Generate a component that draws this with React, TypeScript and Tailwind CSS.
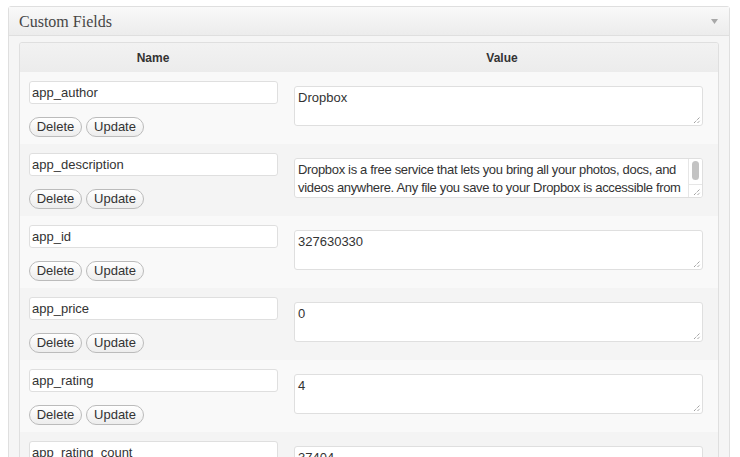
import React from "react";

type Field = { name: string; value: string[]; scroll?: boolean };

const fields: Field[] = [
  { name: "app_author", value: ["Dropbox"] },
  {
    name: "app_description",
    value: [
      "Dropbox is a free service that lets you bring all your photos, docs, and",
      "videos anywhere. Any file you save to your Dropbox is accessible from",
    ],
    scroll: true,
  },
  { name: "app_id", value: ["327630330"] },
  { name: "app_price", value: ["0"] },
  { name: "app_rating", value: ["4"] },
  { name: "app_rating_count", value: ["37404"] },
];

function Grip() {
  return (
    <svg width="8" height="8" viewBox="0 0 8 8" className="absolute right-[1px] bottom-[1px]">
      <path d="M1 7 L7 1 M4.5 7 L7 4.5" stroke="#7a7a7a" strokeWidth="1" strokeDasharray="1 1" />
    </svg>
  );
}

function Row({ field, index }: { field: Field; index: number }) {
  return (
    <div className={`flex h-[72px] ${index % 2 === 0 ? "bg-[#f9f9f9]" : "bg-[#f4f4f4]"}`}>
      <div className="w-[266px] pl-[9px] pt-[9px]">
        <div className="h-[23px] w-[249px] border border-[#dfdfdf] rounded-[3px] bg-white pl-[2px] text-[13px] leading-[21px]">
          {field.name}
        </div>
        <div className="mt-[13px] flex gap-[4px]">
          <button className="h-[20px] w-[53px] rounded-full border border-[#bbb] bg-gradient-to-b from-white to-[#ededed] text-[13px] leading-[18px] text-[#333]">
            Delete
          </button>
          <button className="h-[20px] w-[58px] rounded-full border border-[#bbb] bg-gradient-to-b from-white to-[#ededed] text-[13px] leading-[18px] text-[#333]">
            Update
          </button>
        </div>
      </div>
      <div className="flex-1 pl-[8px] pt-[14px]">
        <div
          className={`relative h-[40px] w-[409px] border border-[#dfdfdf] rounded-[3px] bg-white pl-[3px] pt-[2px] text-[13px] leading-[18px] overflow-hidden ${
            field.scroll ? "tracking-[-0.33px]" : ""
          }`}
        >
          {field.value.map((line) => (
            <div key={line} className="whitespace-nowrap">
              {line}
            </div>
          ))}
          {field.scroll ? (
            <div className="absolute right-0 top-0 bottom-0 w-[14px] border-l border-[#e6e6e6] bg-white">
              <div className="mx-auto mt-[2px] h-[19px] w-[7px] rounded-full bg-[#c3c3c3]" />
              <div className="absolute left-0 right-0 bottom-0 h-[13px] border-t border-[#e6e6e6]" />
            </div>
          ) : null}
          <Grip />
        </div>
      </div>
    </div>
  );
}

export default function App() {
  return (
    <div className="w-[740px] h-[457px] overflow-hidden bg-white pt-[6px] pl-[8px] font-['Liberation_Sans',Arial,sans-serif] text-[#333]">
      <div className="w-[722px] border border-[#dfdfdf] rounded-[3px] bg-[#f5f5f5]">
        <div className="flex h-[29px] items-center justify-between border-b border-[#dfdfdf] bg-gradient-to-b from-[#f9f9f9] to-[#ececec] pl-[10px] pr-[11px]">
          <span className="font-['Liberation_Serif',Georgia,serif] text-[16px] leading-[20px] pt-[1px] text-[#464646]">Custom Fields</span>
          <svg width="7" height="5" viewBox="0 0 7 5">
            <polygon points="0,0 7,0 3.5,5" fill="#a8a8a8" />
          </svg>
        </div>
        <div className="px-[10px] pt-[6px]">
          <div className="border border-[#dfdfdf] rounded-[3px] overflow-hidden">
            <div className="flex h-[29px] items-center bg-gradient-to-b from-[#f2f2f2] to-[#ececec] text-[12px] font-bold text-[#333]">
              <div className="w-[266px] text-center">Name</div>
              <div className="flex-1 text-center">Value</div>
            </div>
            {fields.map((f, i) => (
              <Row key={f.name} field={f} index={i} />
            ))}
          </div>
        </div>
      </div>
    </div>
  );
}
